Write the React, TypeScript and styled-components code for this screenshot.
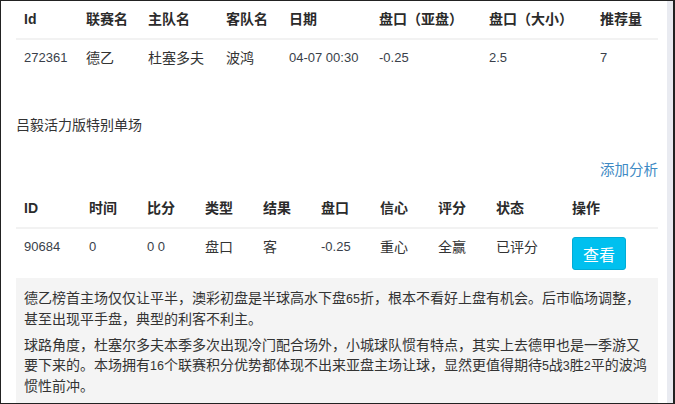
import React from 'react'
import styled, { createGlobalStyle } from 'styled-components'

const GlobalStyle = createGlobalStyle`
    html, body {
        margin: 0;
        padding: 0;
        background: #fff;
    }
    body {
        font-family: "Liberation Sans", "Noto Sans CJK SC", sans-serif;
        font-size: 14px;
        color: #333;
    }
`

const Frame = styled.div`
    box-sizing: border-box;
    width: 675px;
    height: 404px;
    border: 1px solid #222;
    border-right-width: 2px;
    display: flex;
    overflow: hidden;
`

const Main = styled.div`
    flex: 1;
    padding: 0 9px 0 15px;
    overflow: hidden;
`

const Track = styled.div`
    width: 6px;
    background: #e9ebf1;
`

const Table = styled.table`
    width: 100%;
    border-collapse: collapse;
    table-layout: fixed;
`

const Th = styled.th<{ w?: number }>`
    box-sizing: border-box;
    width: ${(p) => (p.w ? `${p.w}px` : 'auto')};
    text-align: left;
    font-weight: bold;
    padding: 8px 8px 9px;
    line-height: 20px;
    color: #2b2b2b;
    white-space: nowrap;
    border-bottom: 2px solid #f2f2f2;
`

const Td = styled.td<{ num?: boolean }>`
    box-sizing: border-box;
    padding: 8px;
    line-height: 20px;
    vertical-align: top;
    font-size: ${(p) => (p.num ? '13px' : '14px')};
    color: ${(p) => (p.num ? '#3a3f4a' : '#333')};
    white-space: nowrap;
`

const SectionTitle = styled.div`
    margin-top: 39px;
    line-height: 20px;
`

const ActionBar = styled.div`
    display: flex;
    justify-content: flex-end;
    margin: 25px 0 10px;
`

const Link = styled.a`
    color: #3e8ac4;
    font-size: 14.5px;
    line-height: 20px;
    text-decoration: none;
`

const ViewButton = styled.button`
    background: #00c0ef;
    border: 1px solid #00acd6;
    border-radius: 3px;
    color: #fff;
    font-family: inherit;
    font-size: 16px;
    width: 54px;
    height: 33px;
    padding: 0;
`

const Analysis = styled.div`
    background: #f4f4f4;
    padding: 10px 8px;
`

const Para = styled.p`
    margin: 0 0 6px;
    line-height: 20px;
    font-size: 14px;
`

const Digits = styled.span`
    font-size: 12.5px;
`

const matchCols = [
    { t: 'Id', w: 62 },
    { t: '联赛名', w: 62 },
    { t: '主队名', w: 78 },
    { t: '客队名', w: 63 },
    { t: '日期', w: 90 },
    { t: '盘口（亚盘）', w: 110 },
    { t: '盘口（大小）', w: 111 },
    { t: '推荐量' },
]

const tipCols = [
    { t: 'ID', w: 65 },
    { t: '时间', w: 58 },
    { t: '比分', w: 58 },
    { t: '类型', w: 58 },
    { t: '结果', w: 58 },
    { t: '盘口', w: 59 },
    { t: '信心', w: 58 },
    { t: '评分', w: 58 },
    { t: '状态', w: 76 },
    { t: '操作' },
]

export default function App() {
    return (
        <>
            <GlobalStyle />
            <Frame>
                <Main>
                    <Table>
                        <thead>
                            <tr>
                                {matchCols.map((c) => (
                                    <Th key={c.t} w={c.w}>{c.t}</Th>
                                ))}
                            </tr>
                        </thead>
                        <tbody>
                            <tr>
                                <Td num>272361</Td>
                                <Td>德乙</Td>
                                <Td>杜塞多夫</Td>
                                <Td>波鸿</Td>
                                <Td num>04-07 00:30</Td>
                                <Td num>-0.25</Td>
                                <Td num>2.5</Td>
                                <Td num>7</Td>
                            </tr>
                        </tbody>
                    </Table>

                    <SectionTitle>吕毅活力版特别单场</SectionTitle>

                    <ActionBar>
                        <Link href="#">添加分析</Link>
                    </ActionBar>

                    <Table>
                        <thead>
                            <tr>
                                {tipCols.map((c) => (
                                    <Th key={c.t} w={c.w}>{c.t}</Th>
                                ))}
                            </tr>
                        </thead>
                        <tbody>
                            <tr>
                                <Td num>90684</Td>
                                <Td num>0</Td>
                                <Td num>0 0</Td>
                                <Td>盘口</Td>
                                <Td>客</Td>
                                <Td num>-0.25</Td>
                                <Td>重心</Td>
                                <Td>全赢</Td>
                                <Td>已评分</Td>
                                <Td>
                                    <ViewButton>查看</ViewButton>
                                </Td>
                            </tr>
                        </tbody>
                    </Table>

                    <Analysis>
                        <Para>
                            德乙榜首主场仅仅让平半，澳彩初盘是半球高水下盘<Digits>65</Digits>折，根本不看好上盘有机会。后市临场调整，甚至出现平手盘，典型的利客不利主。
                        </Para>
                        <Para>
                            球路角度，杜塞尔多夫本季多次出现冷门配合场外，小城球队惯有特点，其实上去德甲也是一季游又要下来的。本场拥有<Digits>16</Digits>个联赛积分优势都体现不出来亚盘主场让球，显然更值得期待<Digits>5</Digits>战<Digits>3</Digits>胜<Digits>2</Digits>平的波鸿惯性前冲。
                        </Para>
                    </Analysis>
                </Main>
                <Track />
            </Frame>
        </>
    )
}
